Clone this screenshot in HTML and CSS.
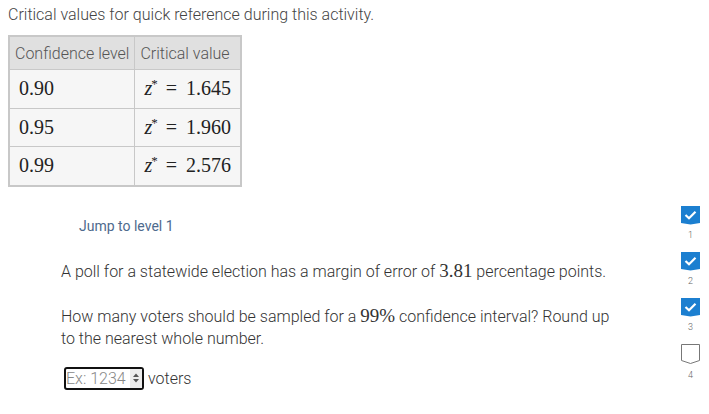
FILE: index.html
```html
<!DOCTYPE html>
<html>
<head>
<meta charset="utf-8">
<link rel="stylesheet" href="styles.css">
</head>
<body>
<p class="intro">Critical values for quick reference during this activity.</p>
<table class="crit">
  <thead>
    <tr><th>Confidence level</th><th>Critical value</th></tr>
  </thead>
  <tbody>
    <tr><td class="m">0.90</td><td class="m"><i>z</i><sup>*</sup><span class="eq">=</span>1.645</td></tr>
    <tr><td class="m">0.95</td><td class="m"><i>z</i><sup>*</sup><span class="eq">=</span>1.960</td></tr>
    <tr><td class="m">0.99</td><td class="m"><i>z</i><sup>*</sup><span class="eq">=</span>2.576</td></tr>
  </tbody>
</table>
<div class="lower">
  <div class="content">
    <div class="jump">Jump to level 1</div>
    <p class="q first">A poll for a statewide election has a margin of error of <span class="mn">3.81</span> percentage points.</p>
    <p class="q">How many voters should be sampled for a <span class="mn">99%</span> confidence interval? Round up to the nearest whole number.</p>
    <div class="answer">
      <div class="inp"><span class="ph">Ex: 1234</span><span class="spin"><svg width="8" height="12" viewBox="0 0 8 12"><path d="M1 5 L4 1.5 L7 5 Z M1 7 L4 10.5 L7 7 Z" fill="#555"/></svg></span></div>
      <span class="unit">voters</span>
    </div>
  </div>
  <div class="levels">
    <div class="lvl"><svg class="badge" width="19" height="19" viewBox="0 0 19 19"><path d="M0 0 H19 V17 L9.5 18.6 L0 17 Z" fill="#1c7fd0"/><path d="M4.5 9 L8 12.3 L14.5 5.8" stroke="#fff" stroke-width="2.2" fill="none"/></svg><span class="num">1</span></div>
    <div class="lvl"><svg class="badge" width="19" height="19" viewBox="0 0 19 19"><path d="M0 0 H19 V17 L9.5 18.6 L0 17 Z" fill="#1c7fd0"/><path d="M4.5 9 L8 12.3 L14.5 5.8" stroke="#fff" stroke-width="2.2" fill="none"/></svg><span class="num">2</span></div>
    <div class="lvl"><svg class="badge" width="19" height="19" viewBox="0 0 19 19"><path d="M0 0 H19 V17 L9.5 18.6 L0 17 Z" fill="#1c7fd0"/><path d="M4.5 9 L8 12.3 L14.5 5.8" stroke="#fff" stroke-width="2.2" fill="none"/></svg><span class="num">3</span></div>
    <div class="lvl"><svg class="badge" width="19" height="21" viewBox="0 0 19 21"><path d="M0.5 0.5 H18.5 V16.5 L9.5 19.5 L0.5 16.5 Z" fill="#fff" stroke="#777" stroke-width="1"/></svg><span class="num">4</span></div>
  </div>
</div>
</body>
</html>
```
FILE: styles.css
```css
body {
  margin: 8px;
  font-family: Roboto, "Liberation Sans", sans-serif;
  font-weight: 300;
  color: #333;
  background: #fff;
}
.intro {
  margin: 0;
  font-size: 16px;
  line-height: 14px;
  color: #444;
}
.crit {
  margin-top: 13px;
  border-collapse: collapse;
  border: 2px solid #c8c8c8;
  font-size: 16px;
}
.crit th {
  background: #e0e0e0;
  font-weight: 300;
  color: #555;
  text-align: left;
  padding: 0 5px;
  height: 32px;
  border: 1px solid #c8c8c8;
}
.crit td {
  background: #f6f6f6;
  border: 1px solid #c8c8c8;
  height: 37.6px;
  padding: 0 9px;
}
.crit td.m {
  font-family: "Liberation Serif", serif;
  font-weight: 400;
  font-size: 20px;
  color: #222;
}
.crit td.m i {
  font-style: italic;
}
.crit td.m sup {
  font-size: 13px;
  vertical-align: 7px;
  line-height: 0;
  margin-left: -1px;
}
.eq {
  margin: 0 9px 0 8px;
}
.lower {
  display: flex;
  justify-content: space-between;
  margin-top: 19px;
}
.content {
  padding-left: 53px;
  padding-top: 12px;
}
.jump {
  margin-left: 18px;
  font-size: 14px;
  font-weight: 400;
  color: #4e6a8d;
  line-height: 16px;
}
.q {
  font-size: 16px;
  line-height: 22px;
  margin: 23px 0 0 0;
  width: 560px;
  color: #333;
}
.q.first {
  margin-top: 27px;
}
.mn {
  font-family: "Liberation Serif", serif;
  font-size: 19px;
  font-weight: 400;
  line-height: 16px;
}
.answer {
  display: flex;
  align-items: center;
  margin-top: 17px;
  margin-left: 3px;
}
.inp {
  display: flex;
  align-items: center;
  width: 76px;
  height: 19px;
  border: 2px solid #111;
  border-radius: 3px;
}
.ph {
  color: #888;
  font-size: 16px;
  flex: 1;
  line-height: 19px;
}
.spin {
  display: flex;
  align-items: center;
  justify-content: center;
  width: 12px;
  height: 19px;
  background: #ececec;
}
.unit {
  margin-left: 4px;
  font-size: 16px;
}
.levels {
  display: flex;
  flex-direction: column;
  align-items: center;
  width: 19px;
  margin-right: 1px;
}
.lvl {
  display: flex;
  flex-direction: column;
  align-items: center;
  height: 46px;
}
.badge {
  display: block;
}
.num {
  font-size: 9px;
  color: #666;
  margin-top: 5px;
  line-height: 10px;
}
```
